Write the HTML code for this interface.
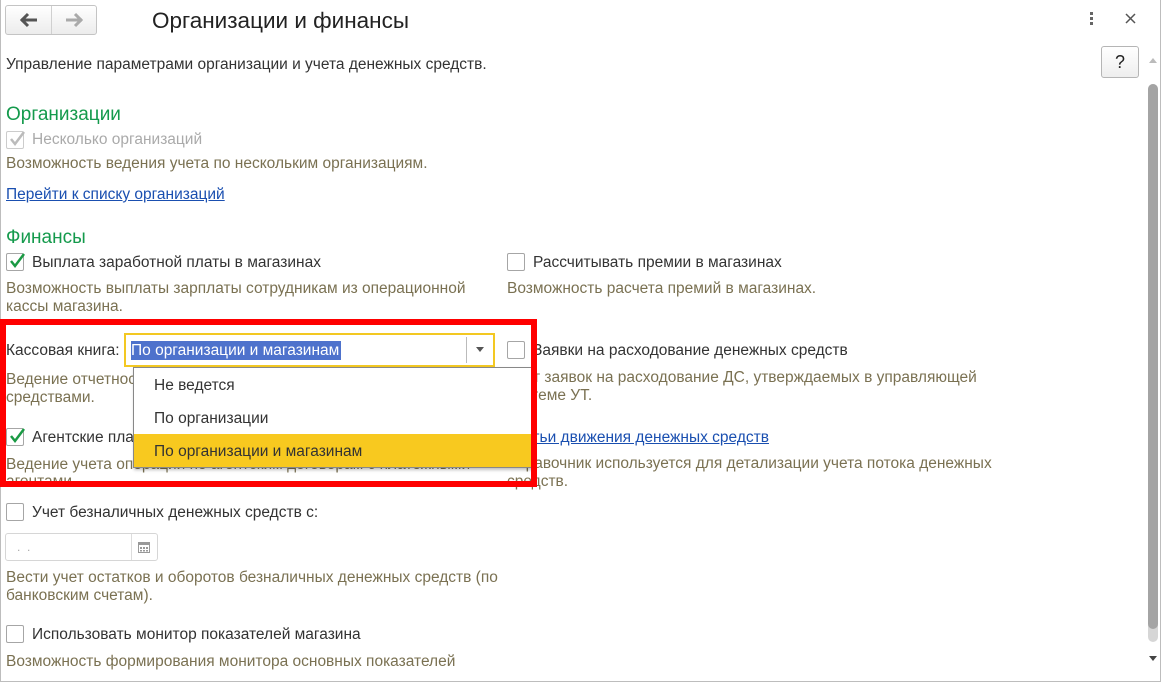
<!DOCTYPE html>
<html><head><meta charset="utf-8"><style>
*{margin:0;padding:0;box-sizing:border-box}
body{width:1161px;height:682px;background:#fff;font-family:"Liberation Sans",Arial,sans-serif;font-size:15.5px;color:#333;position:relative;overflow:hidden}
.a{position:absolute;white-space:nowrap;line-height:19px}
.d{color:#7a7152}
.g{color:#149a4c;font-size:19px;line-height:22px}
.lk{color:#1a4fb0;text-decoration:underline}
.cb{position:absolute;width:18px;height:18px;border:1px solid #a6a6a6;border-radius:2px;background:#fff}
.cb svg{position:absolute;left:1px;top:-2px}
</style></head><body>
<div style="position:absolute;left:0;top:0;width:1161px;height:682px;border:1px solid #bdbdbd;border-top:none"></div>
<div style="position:absolute;left:5px;top:5px;width:92px;height:30px;border:1px solid #c4c4c4;border-radius:3px;background:linear-gradient(#fff,#ececec)"></div>
<div style="position:absolute;left:51px;top:6px;width:1px;height:28px;background:#d0d0d0"></div>
<svg style="position:absolute;left:19px;top:12px" width="20" height="16"><path d="M2 8h16M9 2L3 8l6 6" stroke="#555" stroke-width="3" fill="none"/></svg>
<svg style="position:absolute;left:64px;top:12px" width="20" height="16"><path d="M2 8h16M11 2l6 6-6 6" stroke="#aaa" stroke-width="3" fill="none"/></svg>
<div class="a" style="left:152px;top:8px;font-size:22.5px;line-height:26px;color:#222">Организации и финансы</div>
<div style="position:absolute;left:1090px;top:12px;width:4px">
<div style="width:3px;height:3px;background:#666;margin-bottom:2px"></div><div style="width:3px;height:3px;background:#666;margin-bottom:2px"></div><div style="width:3px;height:3px;background:#666"></div></div>
<svg style="position:absolute;left:1125px;top:13px" width="11" height="11"><path d="M1 1l9 9M10 1l-9 9" stroke="#555" stroke-width="1.5"/></svg>
<div style="position:absolute;left:1101px;top:46px;width:38px;height:32px;border:1px solid #b5b5b5;border-radius:3px;background:linear-gradient(#fff,#eee);text-align:center;font-size:18px;line-height:30px;color:#222">?</div>
<svg style="position:absolute;left:1149px;top:57px" width="8" height="6"><path d="M0 6L4 1 8 6z" fill="#bbb"/></svg>
<div style="position:absolute;left:1148px;top:84px;width:10px;height:558px;border-radius:5px;background:#d6d6d6"></div>
<div style="position:absolute;left:1148px;top:84px;width:10px;height:545px;border-radius:5px;background:#a4a4a4"></div>
<svg style="position:absolute;left:1149px;top:656px" width="8" height="6"><path d="M0 0L4 5 8 0z" fill="#444"/></svg>

<div class="a" style="left:6px;top:55px;color:#333">Управление параметрами организации и учета денежных средств.</div>
<div class="a g" style="left:6px;top:104px">Организации</div>
<div class="cb" style="left:6px;top:131px;border-color:#ccc"><svg width="18" height="18"><path d="M3 9l4 5 9-12" stroke="#bbb" stroke-width="2.5" fill="none"/></svg></div>
<div class="a" style="left:32px;top:130px;color:#aaa">Несколько организаций</div>
<div class="a d" style="left:6px;top:154px">Возможность ведения учета по нескольким организациям.</div>
<div class="a lk" style="left:6px;top:185px">Перейти к списку организаций</div>
<div class="a g" style="left:6px;top:227px">Финансы</div>
<div class="cb" style="left:6px;top:253px"><svg width="18" height="18"><path d="M3 9l4 5 9-12" stroke="#1a9a44" stroke-width="2.5" fill="none"/></svg></div>
<div class="a" style="left:32px;top:253px">Выплата заработной платы в магазинах</div>
<div class="a d" style="left:6px;top:279px">Возможность выплаты зарплаты сотрудникам из операционной</div>
<div class="a d" style="left:6px;top:297px">кассы магазина.</div>
<div class="cb" style="left:507px;top:253px"></div>
<div class="a" style="left:533px;top:253px">Рассчитывать премии в магазинах</div>
<div class="a d" style="left:507px;top:279px">Возможность расчета премий в магазинах.</div>

<div class="a" style="left:6px;top:341px">Кассовая книга:</div>
<div class="a d" style="left:6px;top:370px">Ведение отчетности по кассовым операциям с денежными</div>
<div class="a d" style="left:6px;top:388px">средствами.</div>
<div class="cb" style="left:507px;top:341px"></div>
<div class="a" style="left:533px;top:341px">Заявки на расходование денежных средств</div>
<div class="a d" style="left:507px;top:368px">Учет заявок на расходование ДС, утверждаемых в управляющей</div>
<div class="a d" style="left:507px;top:386px">системе УТ.</div>
<div class="cb" style="left:6px;top:428px"><svg width="18" height="18"><path d="M3 9l4 5 9-12" stroke="#1a9a44" stroke-width="2.5" fill="none"/></svg></div>
<div class="a" style="left:32px;top:428px">Агентские платежи</div>
<div class="a d" style="left:6px;top:455px">Ведение учета операций по агентским договорам с платежными</div>
<div class="a d" style="left:6px;top:472px">агентами.</div>
<div class="a lk" style="left:506px;top:428px">Статьи движения денежных средств</div>
<div class="a d" style="left:506px;top:454px">Справочник используется для детализации учета потока денежных</div>
<div class="a d" style="left:507px;top:472px">средств.</div>

<div style="position:absolute;left:124px;top:333px;width:371px;height:34px;border:2px solid #f3c822;background:#fff"></div>
<div class="a" style="left:131px;top:341px;background:#4e72cc;color:#fff;padding-right:2px">По организации и магазинам</div>
<div style="position:absolute;left:466px;top:337px;width:1px;height:26px;background:#bbb"></div>
<svg style="position:absolute;left:476px;top:347px" width="8" height="5"><path d="M0 0h8L4 5z" fill="#555"/></svg>
<div style="position:absolute;left:133px;top:367px;width:400px;height:101px;border:1px solid #888;background:#fff;box-shadow:1px 2px 3px rgba(0,0,0,.25)">
<div class="a" style="left:20px;top:8px">Не ведется</div>
<div class="a" style="left:20px;top:41px">По организации</div>
<div style="position:absolute;left:0;top:66px;width:398px;height:33px;background:#f8c91f"></div>
<div class="a" style="left:20px;top:74px">По организации и магазинам</div>
</div>
<div style="position:absolute;left:0;top:319px;width:537px;height:168px;border:6px solid #f00"></div>

<div class="cb" style="left:6px;top:503px"></div>
<div class="a" style="left:32px;top:503px">Учет безналичных денежных средств с:</div>
<div style="position:absolute;left:5px;top:533px;width:153px;height:28px;border:1px solid #d6d6d6;border-radius:3px"></div>
<div style="position:absolute;left:131px;top:534px;width:1px;height:26px;background:#ddd"></div>
<div class="a" style="left:17px;top:538px;color:#aaa;font-size:12px">.&nbsp;&nbsp;.</div>
<svg style="position:absolute;left:138px;top:540px" width="12" height="13"><rect x="0.5" y="2.5" width="11" height="10" fill="none" stroke="#999"/><rect x="0" y="2" width="12" height="3" fill="#999"/><g fill="#999"><rect x="2" y="7" width="2" height="2"/><rect x="5" y="7" width="2" height="2"/><rect x="8" y="7" width="2" height="2"/><rect x="2" y="10" width="2" height="1.5"/><rect x="5" y="10" width="2" height="1.5"/><rect x="8" y="10" width="2" height="1.5"/></g></svg>
<div class="a d" style="left:6px;top:568px">Вести учет остатков и оборотов безналичных денежных средств (по</div>
<div class="a d" style="left:6px;top:586px">банковским счетам).</div>
<div class="cb" style="left:6px;top:625px"></div>
<div class="a" style="left:32px;top:625px">Использовать монитор показателей магазина</div>
<div class="a d" style="left:6px;top:652px">Возможность формирования монитора основных показателей</div>
</body></html>
